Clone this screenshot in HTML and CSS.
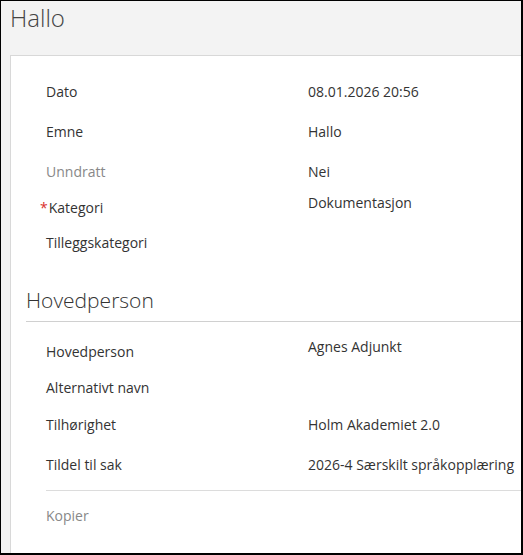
FILE: index.html
```html
<!DOCTYPE html>
<html lang="no">

<head>
    <meta charset="UTF-8">
    <meta name="viewport" content="width=device-width, initial-scale=1.0">
    <title>Hallo</title>
    <link rel="stylesheet" href="styles.css">
</head>

<body>
    <div class="frame">
        <h1 class="title">Hallo</h1>

        <div class="panel">
            <div class="row row-first">
                <div class="label">Dato</div>
                <div class="value">08.01.2026 20:56</div>
            </div>
            <div class="row">
                <div class="label">Emne</div>
                <div class="value">Hallo</div>
            </div>
            <div class="row">
                <div class="label muted">Unndratt</div>
                <div class="value">Nei</div>
            </div>
            <div class="row row-field">
                <div class="label label-required"><span class="required">*</span>Kategori</div>
                <div class="value">Dokumentasjon</div>
            </div>
            <div class="row row-short">
                <div class="label">Tilleggskategori</div>
                <div class="value"></div>
            </div>

            <h2 class="section">Hovedperson</h2>

            <div class="row row-field row-person">
                <div class="label">Hovedperson</div>
                <div class="value">Agnes Adjunkt</div>
            </div>
            <div class="row row-short">
                <div class="label">Alternativt navn</div>
                <div class="value"></div>
            </div>
            <div class="row">
                <div class="label">Tilhørighet</div>
                <div class="value">Holm Akademiet 2.0</div>
            </div>
            <div class="row">
                <div class="label">Tildel til sak</div>
                <div class="value">2026-4 Særskilt språkopplæring</div>
            </div>

            <div class="actions">
                <span class="muted">Kopier</span>
            </div>
        </div>
    </div>
</body>

</html>
```

FILE: styles.css
```css
* {
    box-sizing: border-box;
}

body {
    margin: 0;
    font-family: "Open Sans", Arial, sans-serif;
    font-size: 14px;
    color: #333;
}

.frame {
    height: 555px;
    overflow: hidden;
    background: #f3f3f3;
    border: 1px solid #000;
    border-right-width: 2px;
    border-bottom-width: 2px;
}

.title {
    margin: 0;
    padding: 0 0 0 9px;
    height: 54px;
    font-size: 24px;
    font-weight: 300;
    line-height: 34px;
    color: #444;
}

.panel {
    margin-left: 9px;
    width: 560px;
    min-height: 600px;
    padding: 15px 0 0 0;
    background: #fff;
    border-top: 1px solid #d8d8d8;
    border-left: 1px solid #d8d8d8;
}

.row {
    display: grid;
    grid-template-columns: 297px 1fr;
    height: 40px;
    align-items: center;
    line-height: 20px;
}

.row-first {
    height: 41px;
}

.row-short {
    height: 34px;
}

.row-field {
    height: 34px;
    align-items: start;
}

.row-field .label {
    padding-top: 6px;
}

.row-field .value {
    padding-top: 1px;
}

.row-person {
    height: 49px;
}

.row-person .label {
    padding-top: 20px;
}

.row-person .value {
    padding-top: 15px;
}

.label {
    padding-left: 35px;
}

.label-required {
    padding-left: 29px;
}

.required {
    margin-right: 1px;
    color: #d9302c;
}

.muted {
    color: #888;
}

.section {
    margin: 25px 0 0 15px;
    padding-bottom: 6px;
    font-size: 21px;
    font-weight: 300;
    line-height: 30px;
    color: #333;
    border-bottom: 1px solid #d0d0d0;
}

.actions {
    margin: 5px 0 0 35px;
    padding-top: 15px;
    border-top: 1px solid #dcdcdc;
    line-height: 20px;
}
```
